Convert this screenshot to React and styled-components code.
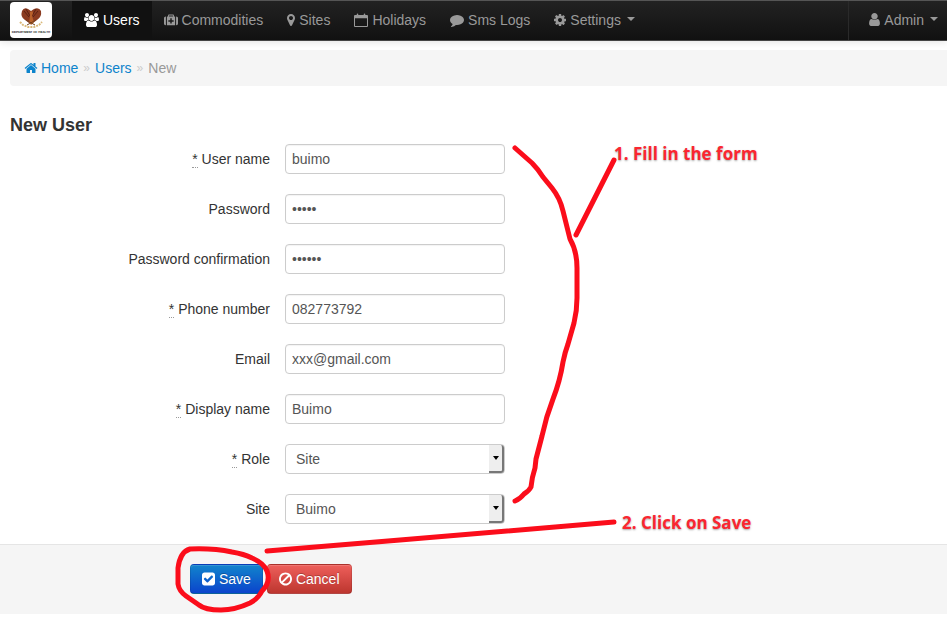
import React from "react";
import styled, { createGlobalStyle } from "styled-components";

const GlobalStyle = createGlobalStyle`
  * { box-sizing: border-box; }
  body {
    margin: 0;
    background: #fff;
    color: #333;
    font: 14px/20px "Liberation Sans", Arial, sans-serif;
  }
`;

const Page = styled.div`
  position: relative;
`;

const Navbar = styled.nav`
  display: flex;
  height: 41px;
  padding-left: 10px;
  background: linear-gradient(#222, #111);
  border-top: 1px solid #555;
  border-bottom: 1px solid #444;
  box-shadow: 0 1px 8px rgba(0, 0, 0, 0.12);
`;

const Brand = styled.a`
  display: flex;
  width: 42px;
  height: 36px;
  margin: 1px 20px 0 0;
  background: #fff;
  border-radius: 4px;
`;

const NavLink = styled.a`
  display: flex;
  align-items: center;
  gap: 4px;
  padding: 0 ${(p) => (p.$end ? 9 : 12)}px 2px 12px;
  color: ${(p) => (p.$active ? "#fff" : "#999")};
  background: ${(p) => (p.$active ? "#111" : "transparent")};
  text-decoration: none;
  white-space: nowrap;
`;

const AccountMenu = styled.div`
  display: flex;
  margin-left: auto;
  padding-left: 8px;
  border-left: 1px solid #2a2a2a;
`;

const Caret = styled.span`
  margin: 0 0 2px 2px;
  border: 4px solid transparent;
  border-top-color: #999;
  border-bottom: 0;
`;

const Glyph = styled.svg`
  flex: none;
  width: ${(p) => p.$w || 14}px;
  height: 14px;
  fill: currentColor;
`;

const Breadcrumb = styled.nav`
  display: flex;
  align-items: center;
  gap: 5px;
  height: 36px;
  margin: 9px 0 0 10px;
  padding: 0 14px;
  background: #f5f5f5;
  border-radius: 4px 0 0 4px;
  color: #999;
`;

const Crumb = styled.a`
  display: flex;
  align-items: center;
  gap: 3px;
  color: #0d84cc;
  text-decoration: none;
`;

const Separator = styled.span`
  color: #ccc;
  font-size: 12px;
`;

const Title = styled.h1`
  margin: 29px 0 8px 10px;
  font-size: 18px;
  line-height: 21px;
`;

const Rows = styled.div`
  display: grid;
  gap: 20px;
  padding-bottom: 20px;
`;

const Row = styled.div`
  display: grid;
  grid-template-columns: 270px 220px;
  column-gap: 15px;
  align-items: center;
`;

const Label = styled.label`
  text-align: right;
`;

const Required = styled.abbr`
  text-decoration: none;
  border-bottom: 1px dotted #999;
`;

const TextInput = styled.input`
  width: 100%;
  height: 30px;
  padding: 4px 6px;
  color: #555;
  background: #fff;
  border: 1px solid #ccc;
  border-radius: 4px;
  font: inherit;
  box-shadow: inset 0 1px 1px rgba(0, 0, 0, 0.05);
`;

const SelectBox = styled.div`
  position: relative;
`;

const Select = styled.select`
  display: block;
  width: 100%;
  height: 30px;
  padding: 4px 24px 4px 10px;
  appearance: none;
  color: #555;
  background: #fff;
  border: 1px solid #ccc;
  border-radius: 4px;
  font: inherit;
`;

const SelectArrow = styled.span`
  position: absolute;
  inset: 1px 1px 1px auto;
  display: grid;
  place-items: center;
  width: 15px;
  background: #eee;
  border-right: 2px solid #777;
  border-bottom: 2px solid #777;
  border-radius: 0 3px 3px 0;
  pointer-events: none;

  &::after {
    content: "";
    border: 3px solid transparent;
    border-top: 4px solid #000;
    border-bottom: 0;
  }
`;

const Actions = styled.div`
  display: flex;
  gap: 4px;
  padding: 19px 0 20px 190px;
  background: #f5f5f5;
  border-top: 1px solid #e5e5e5;
`;

const Button = styled.button`
  display: flex;
  align-items: center;
  gap: 4px;
  height: 30px;
  padding: 0 11px;
  color: #fff;
  font: inherit;
  text-shadow: 0 -1px 0 rgba(0, 0, 0, 0.25);
  background: ${(p) => (p.$danger ? "linear-gradient(#ee5f5b, #bd362f)" : "linear-gradient(#1184cc, #0b44cc)")};
  border: 1px solid;
  border-color: rgba(0, 0, 0, 0.1) rgba(0, 0, 0, 0.1) rgba(0, 0, 0, 0.25);
  border-radius: 4px;
  box-shadow: inset 0 1px 0 rgba(255, 255, 255, 0.15);
`;

const Marks = styled.svg`
  position: absolute;
  top: 0;
  left: 0;
  width: 800px;
  height: 619px;
  pointer-events: none;
  fill: none;
  stroke: #fb0d1b;
  stroke-width: 5px;
  stroke-linecap: round;
  stroke-linejoin: round;
`;

const Note = styled.span`
  position: absolute;
  top: ${(p) => p.$top}px;
  left: ${(p) => p.$left}px;
  color: #fb2630;
  font: bold 17px/22px "Open Sans", sans-serif;
  text-shadow: 0 1px 2px rgba(0, 0, 0, 0.35);
  white-space: nowrap;
`;

const paths = {
  home: "M1472 992v480q0 26-19 45t-45 19h-384v-384h-256v384h-384q-26 0-45-19t-19-45v-480q0-1 .5-3t.5-3l575-474 575 474q1 2 1 6zm223-69l-62 74q-8 9-21 11h-3q-13 0-21-7l-692-577-692 577q-12 8-24 7-13-2-21-11l-62-74q-8-10-7-23.5t11-21.5l719-599q32-26 76-26t76 26l244 204v-195q0-14 9-23t23-9h192q14 0 23 9t9 23v408l219 182q10 8 11 21.5t-7 23.5z",
  users: "M529 896q-162 5-265 128h-134q-82 0-138-40.5t-56-118.5q0-353 124-353 6 0 43.5 21t97.5 42.5 119 21.5q67 0 133-23-5 37-5 66 0 139 81 256zm1071 637q0 120-73 189.5t-194 69.5h-874q-121 0-194-69.5t-73-189.5q0-53 3.5-103.5t14-109 26.5-108.5 43-97.5 62-81 85.5-53.5 111.5-20q10 0 43 21.5t73 48 107 48 135 21.5 135-21.5 107-48 73-48 43-21.5q61 0 111.5 20t85.5 53.5 62 81 43 97.5 26.5 108.5 14 109 3.5 103.5zm-1024-1277q0 106-75 181t-181 75-181-75-75-181 75-181 181-75 181 75 75 181zm704 384q0 159-112.5 271.5t-271.5 112.5-271.5-112.5-112.5-271.5 112.5-271.5 271.5-112.5 271.5 112.5 112.5 271.5zm576 225q0 78-56 118.5t-138 40.5h-134q-103-123-265-128 81-117 81-256 0-29-5-66 66 23 133 23 59 0 119-21.5t97.5-42.5 43.5-21q124 0 124 353zm-128-609q0 106-75 181t-181 75-181-75-75-181 75-181 181-75 181 75 75 181z",
  medkit: "M224 448v1152h-32q-92 0-158-66t-66-158v-704q0-92 66-158t158-66zm1376 0q92 0 158 66t66 158v704q0 92-66 158t-158 66h-32v-1152zM352 448h160v-192q0-40 28-68t68-28h576q40 0 68 28t28 68v192h160v1152h-1088zm288 0h512v-160h-512zm160 224v256h-256v192h256v256h192v-256h256v-192h-256v-256z",
  marker: "M1152 640q0-106-75-181t-181-75-181 75-75 181 75 181 181 75 181-75 75-181zm256 0q0 109-33 179l-364 774q-16 33-47.5 52t-67.5 19-67.5-19-46.5-52l-365-774q-33-70-33-179 0-212 150-362t362-150 362 150 150 362z",
  calendar: "M128 256h224v-100q0-92 96-92t96 92v100h704v-100q0-92 96-92t96 92v100h224q128 0 128 128v1280q0 128-128 128h-1536q-128 0-128-128v-1280q0-128 128-128zm0 416v992h1536v-992z",
  comment: "M1792 896q0 174-120 321.5t-326 233-450 85.5q-70 0-145-8-198 175-460 242-49 14-114 22-17 2-30.5-9t-17.5-29v-1q-3-4-.5-12t2-10 4.5-9.5l6-9 7-8.5 8-9q7-8 31-34.5t34.5-38 31-39.5 32.5-51 27-59 26-76q-157-89-247.5-220t-90.5-281q0-130 71-248.5t191-204.5 286-136.5 348-50.5q244 0 450 85.5t326 233 120 321.5z",
  cog: "M1152 896q0-106-75-181t-181-75-181 75-75 181 75 181 181 75 181-75 75-181zm512-109v222q0 12-8 23t-20 13l-185 28q-19 54-39 91 35 50 107 138 10 12 10 25t-9 23q-27 37-99 108t-94 71q-12 0-26-9l-138-108q-44 23-91 38-16 136-29 186-7 28-36 28h-222q-14 0-24.5-8.5t-11.5-21.5l-28-184q-49-16-90-37l-141 107q-10 9-25 9-14 0-25-11-126-114-165-168-7-10-7-23 0-12 8-23 15-21 51-66.5t54-70.5q-27-50-41-99l-183-27q-13-2-21-12.5t-8-23.5v-222q0-12 8-23t19-13l186-28q14-46 39-92-40-57-107-138-10-12-10-24 0-10 9-23 26-36 98.5-107.5t94.5-71.5q13 0 26 10l138 107q44-23 91-38 16-136 29-186 7-28 36-28h222q14 0 24.5 8.5t11.5 21.5l28 184q49 16 90 37l142-107q9-9 24-9 13 0 25 10 129 119 165 170 7 8 7 22 0 12-8 23-15 21-51 66.5t-54 70.5q26 50 41 98l183 28q13 2 21 12.5t8 23.5z",
  user: "M1536 1399q0 109-62.5 187t-150.5 78h-854q-88 0-150.5-78t-62.5-187q0-85 8.5-160.5t31.5-152 58.5-131 94-89 134.5-34.5q131 128 313 128t313-128q76 0 134.5 34.5t94 89 58.5 131 31.5 152 8.5 160.5zm-256-887q0 159-112.5 271.5t-271.5 112.5-271.5-112.5-112.5-271.5 112.5-271.5 271.5-112.5 271.5 112.5 112.5 271.5z",
  check: "M813 1299l614-614q19-19 19-45t-19-45l-102-102q-19-19-45-19t-45 19l-467 467-211-211q-19-19-45-19t-45 19l-102 102q-19 19-19 45t19 45l358 358q19 19 45 19t45-19zm851-883v960q0 119-84.5 203.5t-203.5 84.5h-960q-119 0-203.5-84.5t-84.5-203.5v-960q0-119 84.5-203.5t203.5-84.5h960q119 0 203.5 84.5t84.5 203.5z",
  ban: "M1440 893q0-161-87-295l-754 753q137 89 297 89 111 0 211.5-43.5t173.5-116.5 116-174.5 43-212.5zm-999 299l755-754q-135-91-300-91-148 0-273 73t-198 199-73 274q0 162 89 299zm1223-299q0 157-61 300t-163.5 246-245 164-298.5 61-298.5-61-245-164-163.5-246-61-300 61-299.5 163.5-245.5 245-164 298.5-61 298.5 61 245 164 163.5 245.5 61 299.5z",
};

const boxes = {
  users: "-64 0 1920 1792",
  medkit: "-32 0 1856 1792",
  marker: "384 0 1024 1792",
  user: "256 128 1280 1664",
  check: "128 128 1536 1536",
  ban: "128 128 1536 1536",
  cog: "128 128 1536 1536",
};

function Icon({ name, width }) {
  return (
    <Glyph $w={width} viewBox={boxes[name] || "0 0 1792 1792"} aria-hidden="true">
      <path fillRule={name === "users" ? "nonzero" : "evenodd"} d={paths[name]} />
    </Glyph>
  );
}

function Emblem() {
  return (
    <svg width="42" height="36" viewBox="0 0 42 36" role="img" aria-label="Department of Health">
      <path d="M12 9q2-4 6-2l3 2 3-2q5-2 7 2 1 6-4 9l-4 3h-4l-4-3q-5-3-3-9z" fill="#8a3a20" />
      <path d="M14 9l5 6M28 9l-5 6M16 7l4 7M26 7l-4 7" stroke="#5b2113" />
      <path d="M20 10q3-2 3 1l-1 3 2 6-3 3-2-3 1-5z" fill="#b9602a" />
      <path d="M10 20l3 3 5 2h6l5-2 3-3" stroke="#d9b878" strokeWidth="2" fill="none" strokeDasharray="2 1" />
      <path d="M16 18l9 5M26 18l-9 5" stroke="#75431e" />
      <text x="21" y="31" textAnchor="middle" textRendering="geometricPrecision" fontFamily="Liberation Sans, sans-serif" fontWeight="bold" fontSize="3" fill="#222">
        DEPARTMENT OF HEALTH
      </text>
    </svg>
  );
}

const navItems = [
  { icon: "users", text: "Users", width: 15, active: true },
  { icon: "medkit", text: "Commodities", width: 14 },
  { icon: "marker", text: "Sites", width: 8 },
  { icon: "calendar", text: "Holidays", width: 14 },
  { icon: "comment", text: "Sms Logs", width: 14 },
  { icon: "cog", text: "Settings", width: 12, caret: true },
];

const fields = [
  { id: "username", label: "User name", value: "buimo", required: true },
  { id: "password", label: "Password", value: "buimo", type: "password" },
  { id: "confirmation", label: "Password confirmation", value: "buimo1", type: "password" },
  { id: "phone", label: "Phone number", value: "082773792", required: true },
  { id: "email", label: "Email", value: "xxx@gmail.com", type: "email" },
  { id: "display", label: "Display name", value: "Buimo", required: true },
  { id: "role", label: "Role", options: ["Site"], required: true },
  { id: "site", label: "Site", options: ["Buimo"] },
];

function Field({ id, label, value, type = "text", required, options }) {
  return (
    <Row>
      <Label htmlFor={id}>
        {required && <><Required title="required">*</Required>{" "}</>}
        {label}
      </Label>
      {options ? (
        <SelectBox>
          <Select id={id}>{options.map((o) => <option key={o}>{o}</option>)}</Select>
          <SelectArrow />
        </SelectBox>
      ) : (
        <TextInput id={id} type={type} defaultValue={value} />
      )}
    </Row>
  );
}

export default function App() {
  return (
    <Page>
      <GlobalStyle />
      <Navbar>
        <Brand href="#home"><Emblem /></Brand>
        {navItems.map((n) => (
          <NavLink key={n.text} href="#nav" $active={n.active}>
            <Icon name={n.icon} width={n.width} />
            {n.text}
            {n.caret && <Caret />}
          </NavLink>
        ))}
        <AccountMenu>
          <NavLink href="#admin" $end><Icon name="user" width={11} />Admin<Caret /></NavLink>
        </AccountMenu>
      </Navbar>
      <Breadcrumb aria-label="Breadcrumb">
        <Crumb href="#home"><Icon name="home" />Home</Crumb>
        <Separator>»</Separator>
        <Crumb href="#users">Users</Crumb>
        <Separator>»</Separator>
        <span>New</span>
      </Breadcrumb>
      <Title>New User</Title>
      <form onSubmit={(e) => e.preventDefault()}>
        <Rows>{fields.map((f) => <Field key={f.id} {...f} />)}</Rows>
        <Actions>
          <Button type="submit"><Icon name="check" width={13} />Save</Button>
          <Button type="button" $danger><Icon name="ban" width={13} />Cancel</Button>
        </Actions>
      </form>
      <Marks viewBox="0 0 800 619" aria-hidden="true">
        <path d="M515 148L532 163Q538 169 543 177L552 188Q560 198 563 211L570 239Q577 251 577 268V298Q577 311 574 323L568 344Q565 352 563 362Q560 381 553 399Q546 417 542 436L536 459L535 468Q532 477 531 487Q529 491 524 494Q520 499 515 501" />
        <path d="M614 160L576 235M267 551L400 540L614 522" />
        <path d="M190 549Q213 548 232 552Q244 554 252 558Q264 563 267 571Q271 582 262 591Q258 599 250 603Q235 610 221 610Q205 610 199 605L186 596Q179 591 178 584V568Q180 552 190 549Z" />
      </Marks>
      <Note $top={143} $left={614}>1. Fill in the form</Note>
      <Note $top={512} $left={622}>2. Click on Save</Note>
    </Page>
  );
}
